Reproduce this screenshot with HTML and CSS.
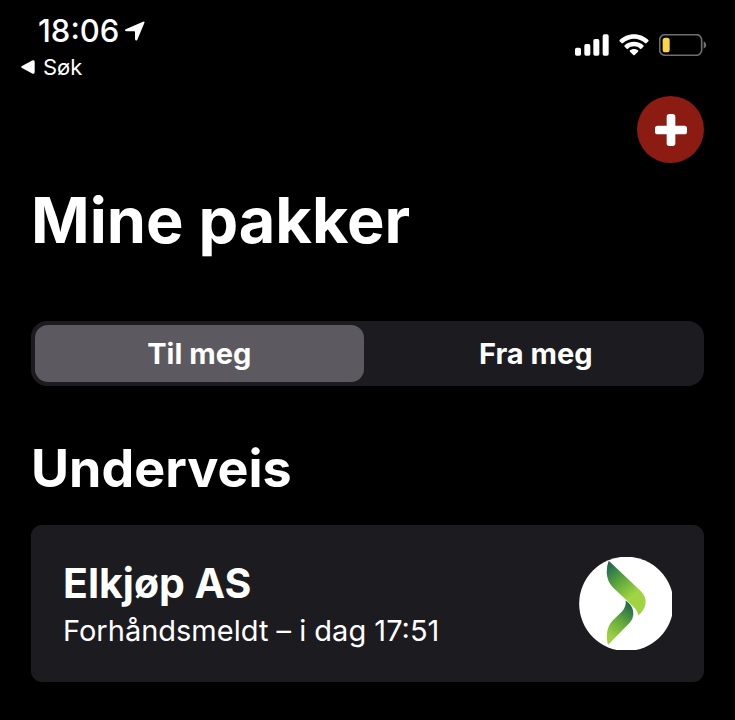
FILE: index.html
```html
<!DOCTYPE html>
<html lang="nb">
<head>
<meta charset="utf-8">
<meta name="viewport" content="width=device-width, initial-scale=1">
<title>Mine pakker</title>
<link rel="stylesheet" href="styles.css">
</head>
<body>
<div class="status">
  <div class="status-left">
    <div class="clock">
      <time>18:06</time>
      <svg class="location" viewBox="0 0 60 60" aria-hidden="true"><path d="M2 25 L54 2 Q60 0 58 6 L37 56 Q32 62 30 54 V33 Q30 31 28 31 H5 Q-3 30 2 25 Z"/></svg>
    </div>
    <a class="back" href="#">
      <svg class="back-icon" viewBox="0 0 42 42" aria-hidden="true"><path d="M3 18 L35 1 Q41 -1 41 6 V36 Q41 43 35 41 L3 24 Q-2 21 3 18 Z"/></svg>
      <span>Søk</span>
    </a>
  </div>
  <div class="indicators" aria-hidden="true">
    <svg class="signal" viewBox="0 0 102 66"><rect x="0" y="41" width="18" height="24" rx="5"/><rect x="28" y="30" width="18" height="35" rx="5"/><rect x="55" y="15" width="18" height="50" rx="5"/><rect x="83" y="1" width="18" height="64" rx="5"/></svg>
    <svg class="wifi" viewBox="0 0 90 66"><path d="M45 1 C62 1 78 8 88 18 Q90 20 88 22 L82 28 Q80 29 78 27 C69 19 57 14 45 14 C33 14 21 19 12 27 Q10 29 8 28 L2 22 Q0 20 2 18 C12 8 28 1 45 1 Z"/><path d="M45 23 C56 23 66 27 73 34 Q75 36 73 38 L67 44 Q65 46 63 44 C58 39 52 37 45 37 C38 37 32 39 27 44 Q25 46 23 44 L17 38 Q15 36 17 34 C24 27 34 23 45 23 Z"/><path d="M45 45 C50 45 54 47 57 49 Q59 51 57 53 L47 63 Q45 65 43 63 L33 53 Q31 51 33 49 C36 47 40 45 45 45 Z"/></svg>
    <svg class="battery" viewBox="0 0 144 66"><rect x="2" y="2" width="126" height="62" rx="16" fill="none" stroke="#6e6e70" stroke-width="5"/><rect x="11" y="11" width="21" height="44" rx="8" fill="#f8d648"/><path d="M134 22 Q142 25 142 33 Q142 41 134 44 Z" fill="#6e6e70"/></svg>
  </div>
</div>

<main class="page">
  <div class="toolbar">
    <button class="add" type="button" aria-label="Legg til pakke">
      <svg viewBox="0 0 96 96" aria-hidden="true"><path d="M43 0 H53 Q61 0 61 8 V35 H88 Q96 35 96 43 V53 Q96 61 88 61 H61 V88 Q61 96 53 96 H43 Q35 96 35 88 V61 H8 Q0 61 0 53 V43 Q0 35 8 35 H35 V8 Q35 0 43 0 Z"/></svg>
    </button>
  </div>
  <h1>Mine pakker</h1>
  <div class="segments">
    <button class="segment selected" type="button" aria-pressed="true">Til meg</button>
    <button class="segment" type="button" aria-pressed="false">Fra meg</button>
  </div>
  <section>
    <h2>Underveis</h2>
    <article class="card">
      <div class="card-text">
        <h3>Elkjøp AS</h3>
        <p>Forhåndsmeldt – i dag 17:51</p>
      </div>
      <svg class="logo" viewBox="54 48 279 280" role="img" aria-label="Elkjøp">
        <defs>
          <linearGradient id="upper" gradientUnits="userSpaceOnUse" x1="138" y1="75" x2="215" y2="165"><stop offset="0" stop-color="#1d6850"/><stop offset=".5" stop-color="#5da63c"/><stop offset="1" stop-color="#a0d443"/></linearGradient>
          <linearGradient id="lower" gradientUnits="userSpaceOnUse" x1="212" y1="198" x2="148" y2="285"><stop offset="0" stop-color="#216b4d"/><stop offset=".5" stop-color="#64a83c"/><stop offset="1" stop-color="#9ccf42"/></linearGradient>
        </defs>
        <circle cx="196" cy="189" r="142" fill="#fff"/>
        <path d="M143 59 L240 151 Q256 167 254 187 Q251 207 232 224 Q231 211 219 199 L155 139 Q139 123 137 96 Q136 75 143 59 Z" fill="url(#upper)"/>
        <path d="M194 179 C210 190 218 204 217 222 Q216 236 207 245 L141 312 C134 289 136 258 155 239 L183 212 Q196 198 194 179 Z" fill="url(#lower)"/>
      </svg>
    </article>
  </section>
</main>
</body>
</html>
```
FILE: styles.css
```css
* {
  box-sizing: border-box;
}

body {
  margin: 0;
  background: #000;
  color: #fff;
  font-family: Inter, "Liberation Sans", sans-serif;
}

h1, h2, h3, p {
  margin: 0;
}

svg {
  display: block;
  flex: none;
  fill: #fff;
}

button {
  border: 0;
  padding: 0;
  color: inherit;
  font: inherit;
  cursor: pointer;
}

.status {
  display: flex;
  justify-content: space-between;
  align-items: flex-start;
  padding: 12px 28px 0 21px;
}

.clock {
  display: flex;
  align-items: center;
  gap: 6px;
  padding-left: 17px;
  font-size: 31px;
  line-height: 37px;
  font-weight: 500;
}

.location {
  width: 20px;
  height: 20px;
}

.back {
  display: flex;
  align-items: center;
  gap: 8px;
  margin-top: 4px;
  color: inherit;
  font-size: 22px;
  line-height: 28px;
  text-decoration: none;
}

.back-icon {
  width: 14px;
  height: 14px;
}

.indicators {
  display: flex;
  gap: 10px;
  padding-top: 22px;
}

.signal {
  width: 34px;
  height: 22px;
}

.wifi {
  width: 30px;
  height: 22px;
}

.battery {
  width: 48px;
  height: 22px;
}

.page {
  padding: 15px 31px 38px;
}

.toolbar {
  display: flex;
  justify-content: flex-end;
}

.add {
  display: grid;
  place-items: center;
  width: 67px;
  height: 67px;
  border-radius: 50%;
  background: #8c1b11;
}

.add svg {
  width: 32px;
  height: 32px;
}

h1 {
  margin-top: 19px;
  font-size: 63px;
  line-height: 76px;
  font-weight: 700;
}

.segments {
  display: grid;
  grid-template-columns: 1fr 1fr;
  gap: 8px;
  margin-top: 63px;
  padding: 4px;
  border-radius: 16px;
  background: #1c1b20;
}

.segment {
  padding: 11px 0 10px;
  border-radius: 13px;
  background: transparent;
  font-size: 29px;
  line-height: 36px;
  font-weight: 700;
}

.segment.selected {
  background: #5c5a60;
}

h2 {
  margin: 51px 0 24px;
  font-size: 52px;
  line-height: 64px;
  font-weight: 700;
}

.card {
  display: flex;
  justify-content: space-between;
  align-items: center;
  padding: 32px;
  border-radius: 11px;
  background: #1c1b20;
}

h3 {
  font-size: 41px;
  line-height: 50px;
  font-weight: 700;
}

.card p {
  margin-top: 5px;
  font-size: 29px;
  line-height: 36px;
}

.logo {
  width: 93px;
  height: 93px;
}
```
